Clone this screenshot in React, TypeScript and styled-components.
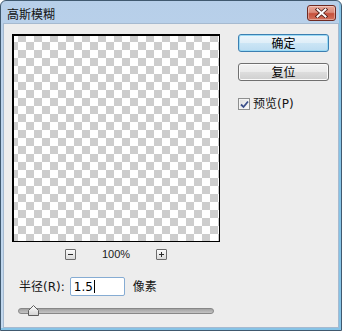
import React from 'react';
import styled, { createGlobalStyle } from 'styled-components';

const GlobalStyle = createGlobalStyle`
  html, body { margin: 0; padding: 0; background: #ffffff; }
  body { width: 342px; height: 331px; overflow: hidden; }
  #root { width: 342px; height: 331px; }
  * { box-sizing: border-box; }
`;

const UI = `"DejaVu Sans", "Noto Sans CJK SC", sans-serif`;
const CJK = `"Noto Sans CJK SC", sans-serif`;

const Window = styled.div`
  width: 342px;
  height: 331px;
  border: 1px solid #40596f;
  border-radius: 6px 6px 0 0;
  background: linear-gradient(180deg, #b7cfe9 0%, #bdd4ec 35%, #c2d8ee 100%);
  box-shadow: inset -2px -2px 0 #86c3e6;
  padding: 0 2px 2px 2px;
  display: flex;
  flex-direction: column;
`;

const TitleBar = styled.div`
  height: 22px;
  padding: 2px 3px 0 4px;
  display: flex;
  align-items: center;
  justify-content: space-between;
`;

const TitleText = styled.span`
  font-family: ${CJK};
  font-size: 12px;
  line-height: 14px;
  color: #121212;
  padding-top: 2px;
`;

const CloseButton = styled.div`
  width: 29px;
  height: 16px;
  border: 1px solid #6e2a22;
  border-radius: 3px;
  background: linear-gradient(180deg, #e8a898 0%, #dc8b7a 45%, #c6503b 55%, #d3735e 100%);
  box-shadow: inset 0 0 0 1px rgba(255, 255, 255, 0.35);
  display: flex;
  align-items: center;
  justify-content: center;
`;

const Content = styled.div`
  flex: 1;
  background: #ededed;
  border: 1px solid #a6bad0;
  padding: 10px 9px 0 8px;
  display: flex;
  justify-content: space-between;
`;

const LeftColumn = styled.div`
  width: 208px;
  display: flex;
  flex-direction: column;
`;

const Preview = styled.div`
  width: 208px;
  height: 208px;
  border: 1px solid #000;
  box-shadow: inset 1px 1px 0 #000;
  background-color: #fff;
  background-image: conic-gradient(#cdcdcd 0 25%, #fff 0 50%, #cdcdcd 0 75%, #fff 0);
  background-size: 16px 16px;
  background-position: -3px -1px;
`;

const ZoomRow = styled.div`
  margin-top: 7px;
  height: 11px;
  display: flex;
  justify-content: center;
  align-items: center;
  gap: 25px;
`;

const ZoomButton = styled.div`
  width: 11px;
  height: 11px;
  border: 1px solid #6c6c6c;
  border-radius: 1px;
  background: linear-gradient(180deg, #fbfbfb, #dadada);
  display: flex;
  align-items: center;
  justify-content: center;
`;

const ZoomLabel = styled.span`
  width: 30px;
  text-align: center;
  font-family: "Liberation Sans", sans-serif;
  font-size: 11px;
  line-height: 11px;
  color: #1a1a1a;
`;

const FieldRow = styled.div`
  margin-top: 17px;
  height: 19px;
  padding-left: 7px;
  display: flex;
  align-items: center;
  font-family: ${UI};
  font-size: 12px;
  line-height: 14px;
  color: #141414;
`;

const TextInput = styled.div`
  width: 55px;
  height: 19px;
  margin-left: 5px;
  border: 1px solid #86acd3;
  border-radius: 2px;
  background: #fff;
  padding-left: 3px;
  display: flex;
  align-items: center;
  font-family: "DejaVu Sans", sans-serif;
  font-size: 12px;
  color: #000;
`;

const Caret = styled.span`
  display: inline-block;
  width: 1px;
  height: 13px;
  margin-left: 1px;
  background: #000;
`;

const Unit = styled.span`
  margin-left: 8px;
`;

const SliderRow = styled.div`
  position: relative;
  margin-top: 9px;
  margin-left: 6px;
  width: 196px;
  height: 11px;
  padding-top: 3px;
`;

const Track = styled.div`
  height: 6px;
  border-radius: 3px;
  border: 1px solid #878787;
  background: linear-gradient(180deg, #a2a2a2, #c4c4c4);
`;

const Thumb = styled.svg`
  position: absolute;
  left: 10px;
  top: 0;
`;

const RightColumn = styled.div`
  width: 91px;
  display: flex;
  flex-direction: column;
`;

const Button = styled.button<{ $primary?: boolean }>`
  width: 91px;
  height: 18px;
  padding: 0;
  margin: 0 0 11px 0;
  border-radius: 3px;
  display: flex;
  align-items: center;
  justify-content: center;
  font-family: ${CJK};
  font-size: 12px;
  line-height: 14px;
  color: #000;
  border: 1px solid ${(p) => (p.$primary ? '#3c7fb1' : '#707070')};
  background: ${(p) =>
    p.$primary
      ? 'linear-gradient(180deg, #edf6fc 0%, #dfeef8 48%, #cbe5f5 52%, #bcdcf1 100%)'
      : 'linear-gradient(180deg, #f3f3f3 0%, #ebebeb 48%, #dddddd 52%, #cfcfcf 100%)'};
  box-shadow: ${(p) => (p.$primary ? 'inset 0 0 0 1px #9bdaf5' : 'inset 0 0 0 1px #fbfbfb')};
`;

const CheckRow = styled.label`
  margin-top: 5px;
  display: flex;
  align-items: center;
  font-family: ${UI};
  font-size: 12px;
  line-height: 14px;
  color: #141414;
`;

const CheckBox = styled.span`
  width: 12px;
  height: 12px;
  margin-right: 3px;
  border: 1px solid #8e8f8f;
  background: linear-gradient(135deg, #dcdcdc, #fbfbfb);
  box-shadow: inset 0 0 0 1px #f4f4f4;
  display: flex;
  align-items: center;
  justify-content: center;
`;

export default function App() {
  return (
    <>
      <GlobalStyle />
      <Window>
        <TitleBar>
          <TitleText>高斯模糊</TitleText>
          <CloseButton>
            <svg width="13" height="10" viewBox="0 0 13 10">
              <path d="M2.5 1.5 L10.5 8.5 M10.5 1.5 L2.5 8.5" stroke="#4a1a14" strokeWidth="3.6" strokeLinecap="square" />
              <path d="M2.5 1.5 L10.5 8.5 M10.5 1.5 L2.5 8.5" stroke="#ffffff" strokeWidth="2" strokeLinecap="square" />
            </svg>
          </CloseButton>
        </TitleBar>
        <Content>
          <LeftColumn>
            <Preview />
            <ZoomRow>
              <ZoomButton>
                <svg width="7" height="7" viewBox="0 0 7 7">
                  <path d="M1 3.5 H6" stroke="#2a2a2a" strokeWidth="1" />
                </svg>
              </ZoomButton>
              <ZoomLabel>100%</ZoomLabel>
              <ZoomButton>
                <svg width="7" height="7" viewBox="0 0 7 7">
                  <path d="M1 3.5 H6 M3.5 1 V6" stroke="#2a2a2a" strokeWidth="1" />
                </svg>
              </ZoomButton>
            </ZoomRow>
            <FieldRow>
              <span>半径(R):</span>
              <TextInput>
                1.5
                <Caret />
              </TextInput>
              <Unit>像素</Unit>
            </FieldRow>
            <SliderRow>
              <Track />
              <Thumb width="11" height="11" viewBox="0 0 11 11">
                <defs>
                  <linearGradient id="thumbFill" x1="0" y1="0" x2="0" y2="1">
                    <stop offset="0" stopColor="#ffffff" />
                    <stop offset="1" stopColor="#d2d2d2" />
                  </linearGradient>
                </defs>
                <polygon points="0.5,5.5 5.5,0.5 10.5,5.5 10.5,10.5 0.5,10.5" fill="url(#thumbFill)" stroke="#5c5c5c" strokeWidth="1" strokeLinejoin="round" />
              </Thumb>
            </SliderRow>
          </LeftColumn>
          <RightColumn>
            <Button $primary>确定</Button>
            <Button>复位</Button>
            <CheckRow>
              <CheckBox>
                <svg width="9" height="9" viewBox="0 0 9 9">
                  <path d="M1 4.5 L3.5 7 L8 1.5" fill="none" stroke="#3b4f8a" strokeWidth="1.8" />
                </svg>
              </CheckBox>
              预览(P)
            </CheckRow>
          </RightColumn>
        </Content>
      </Window>
    </>
  );
}
